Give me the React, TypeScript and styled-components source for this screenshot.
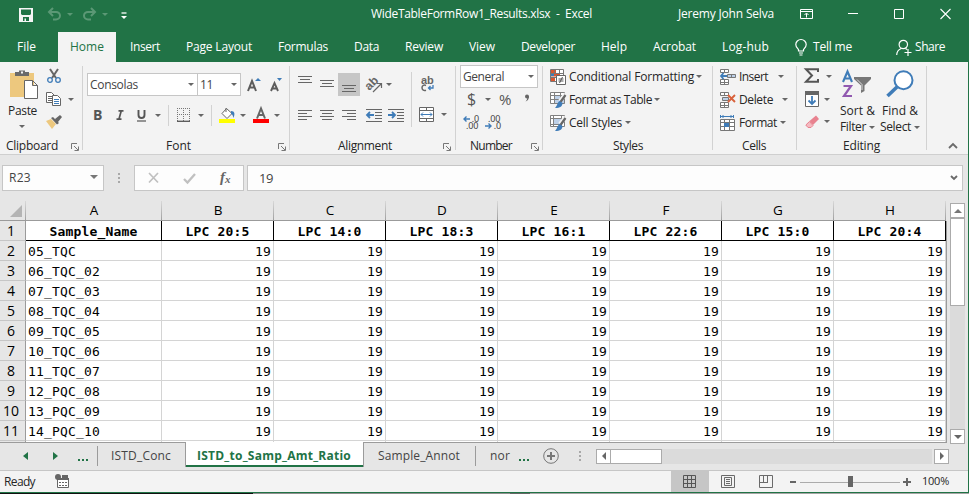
import React, { useLayoutEffect, useRef, useState } from "react";
import styled, { createGlobalStyle, css } from "styled-components";

const GREEN = "#217346";
const GRAY = "#6a6a6a";
const BLUE = "#3f7cb8";

const GlobalStyle = createGlobalStyle`
  * { box-sizing: border-box; }
  body { margin: 0; background: #e6e6e6; overflow: hidden; }
`;

const Window = styled.div`
  width: 969px;
  height: 494px;
  display: flex;
  flex-direction: column;
  font-family: "Open Sans", "Noto Sans", sans-serif;
  font-size: 12px;
  line-height: 16px;
  color: #262626;
  background: #e6e6e6;
  overflow: hidden;
`;

/* ---------- text ---------- */
type LabelStyle = { $w: number; $ml?: number; $size?: number; $color?: string; $bold?: boolean; $up?: number };
const LabelBox = styled.span<LabelStyle>`
  flex: none;
  display: block;
  width: ${(p) => p.$w}px;
  margin-left: ${(p) => p.$ml ?? 0}px;
  margin-bottom: ${(p) => (p.$up ?? 0) * 2}px;
  white-space: pre;
  font-size: ${(p) => p.$size ?? 12}px;
  font-weight: ${(p) => (p.$bold ? 700 : 400)};
  ${(p) => p.$color && css`color: ${p.$color};`}
`;

type LabelProps = { w: number; ml?: number; size?: number; color?: string; bold?: boolean; up?: number; children: string };

/* Tracks its letters so that the text fills exactly the given width. */
function Label({ w, ml, size, color, bold, up, children }: LabelProps) {
  const ref = useRef<HTMLSpanElement>(null);
  const [spacing, setSpacing] = useState(0);
  useLayoutEffect(() => {
    if (ref.current) setSpacing((w - ref.current.getBoundingClientRect().width) / children.length);
  }, []);
  return (
    <LabelBox $w={w} $ml={ml} $size={size} $color={color} $bold={bold} $up={up}>
      <span ref={ref} style={{ letterSpacing: spacing }}>{children}</span>
    </LabelBox>
  );
}

/* ---------- shared parts ---------- */
const Svg = styled.svg<{ $ml?: number; $mt?: number }>`
  flex: none;
  display: block;
  overflow: visible;
  margin-left: ${(p) => p.$ml ?? 0}px;
  margin-top: ${(p) => p.$mt ?? 0}px;
  text { font-family: "Liberation Sans", sans-serif; }
`;

type IconProps = { w: number; h: number; ml?: number; mt?: number; children: React.ReactNode };
const Icon = ({ w, h, ml, mt, children }: IconProps) => (
  <Svg width={w} height={h} viewBox={`0 0 ${w} ${h}`} $ml={ml} $mt={mt} fill="none">{children}</Svg>
);

const Caret = styled.i<{ $ml?: number; $mt?: number; $color?: string }>`
  flex: none;
  width: 0;
  height: 0;
  margin-left: ${(p) => p.$ml ?? 0}px;
  margin-top: ${(p) => p.$mt ?? 0}px;
  border: 3px solid transparent;
  border-top-color: ${(p) => p.$color ?? "#666"};
  border-bottom-width: 0;
`;

const Row = styled.div<{ $h: number; $mt?: number; $pl?: number }>`
  flex: none;
  display: flex;
  align-items: center;
  height: ${(p) => p.$h}px;
  margin-top: ${(p) => p.$mt ?? 0}px;
  padding-left: ${(p) => p.$pl ?? 0}px;
`;

const Column = styled.div<{ $w?: number; $ml?: number }>`
  flex: none;
  display: flex;
  flex-direction: column;
  width: ${(p) => (p.$w ? `${p.$w}px` : "auto")};
  margin-left: ${(p) => p.$ml ?? 0}px;
`;

/* ---------- title bar and ribbon tabs ---------- */
const TitleBar = styled.header`
  flex: none;
  height: 32px;
  display: flex;
  align-items: center;
  background: ${GREEN};
  color: #fff;
  padding-bottom: 4px;
`;

const TabBar = styled.nav`
  flex: none;
  height: 30px;
  display: flex;
  align-items: center;
  background: ${GREEN};
  color: #fff;
`;

const ActiveTab = styled.div`
  width: 58px;
  height: 30px;
  margin: 0 -13px 0 -4px;
  padding-left: 12px;
  display: flex;
  align-items: center;
  background: #f3f3f3;
  color: ${GREEN};
`;

/* name, text width, gap before */
const TABS: [string, number, number][] = [
  ["Insert", 30, 27], ["Page Layout", 66, 26], ["Formulas", 50, 26], ["Data", 25, 26], ["Review", 38, 26], ["View", 26, 26],
  ["Developer", 54, 26], ["Help", 26, 26], ["Acrobat", 43, 26], ["Log-hub", 47, 26],
];

function Header() {
  return (
    <>
      <TitleBar>
        <Icon w={14} h={14} ml={19} mt={2}>
          <path d="M0 0h14v14H0z" fill="#f5f5f5" />
          <path d="M2 1.500h10V6l-1 1H3L2 6zM4 9h6v4H7v-2.500H5.500V13H4z" fill={GREEN} />
        </Icon>
        <Icon w={16} h={14} ml={14}>
          <path d="M6 1L2 5l4 4M2 5h7a4 3.700 0 010 7.400H6" stroke="#5b9875" strokeWidth="2" />
        </Icon>
        <Caret $ml={4} $color="#5b9875" />
        <Icon w={16} h={14} ml={9}>
          <path d="M9 1l4 4-4 4M13 5H6a4 3.700 0 000 7.400h3" stroke="#5b9875" strokeWidth="2" />
        </Icon>
        <Caret $ml={4} $color="#5b9875" />
        <Icon w={6} h={8} ml={13} mt={3}>
          <path d="M.5 1h5" stroke="#fff" strokeWidth="1.300" /><path d="M0 4h6L3 7z" fill="#fff" />
        </Icon>
        <Label w={221} ml={244}>WideTableFormRow1_Results.xlsx  -  Excel</Label>
        <Label w={96} ml={86}>Jeremy John Selva</Label>
        <Icon w={13} h={10} ml={26} mt={-1}>
          <path d="M.5.500h12v9H.5zM1 2.500h11M6.500 8.500v-4M4.500 6l2-2 2 2" stroke="#fff" />
        </Icon>
        <Icon w={10} h={2} ml={35}><path d="M0 .5h10" stroke="#fff" /></Icon>
        <Icon w={10} h={10} ml={36} mt={-1}><path d="M.5.500h9v9h-9z" stroke="#fff" /></Icon>
        <Icon w={11} h={10} ml={36} mt={-1}><path d="M.5 0l10 10M10.500 0l-10 10" stroke="#fff" strokeWidth="1.100" /></Icon>
      </TitleBar>
      <TabBar>
        <Label w={19} ml={17}>File</Label>
        <Column $w={26} />
        <ActiveTab><Label w={34}>Home</Label></ActiveTab>
        {TABS.map(([name, w, gap]) => <Label key={name} w={w} ml={gap}>{name}</Label>)}
        <Icon w={12} h={17} ml={26}>
          <path d="M3.500 12V10.500C2.500 9 .8 8 .8 5.500a5.200 5 0 0110.400 0c0 2.500-1.700 3.500-2.700 5V12zM4 14h4M4.500 16h3" stroke="#fff" strokeWidth="1.200" />
        </Icon>
        <Label w={39} ml={6}>Tell me</Label>
        <Icon w={16} h={17} ml={44}>
          <circle cx="7.300" cy="5.500" r="4.200" stroke="#fff" strokeWidth="1.200" />
          <path d="M.7 16c.1-4 2.200-5.500 4.500-6.500M12 10v7M8.500 13.500h7M9.500 9.500l1.500 1" stroke="#fff" strokeWidth="1.200" />
        </Icon>
        <Label w={30} ml={3}>Share</Label>
      </TabBar>
    </>
  );
}

/* ---------- ribbon ---------- */
const Frame = styled.main`
  flex: none;
  height: 431px;
  display: flex;
  flex-direction: column;
  border-right: 1px solid ${GREEN};
  border-bottom: 1px solid ${GREEN};
`;

const Ribbon = styled.section`
  flex: none;
  display: flex;
  height: 93px;
  padding-top: 3px;
  background: #f3f3f3;
  border-bottom: 1px solid #cfcfcf;
`;

const Group = styled.div<{ $w: number }>`
  flex: none;
  width: ${(p) => p.$w}px;
  height: 89px;
  display: flex;
  flex-direction: column;
  background: linear-gradient(#d2d2d2, #d2d2d2) right 1px / 1px 84px no-repeat;
`;
const GroupBody = styled.div` height: 73px; display: flex; `;
const GroupFooter = styled.div` height: 16px; display: flex; align-items: center; `;

const Combo = styled.div<{ $w: number; $h: number; $ml?: number }>`
  flex: none;
  width: ${(p) => p.$w}px;
  height: ${(p) => p.$h}px;
  margin-left: ${(p) => p.$ml ?? 0}px;
  padding: 0 3px 0 2px;
  display: flex;
  align-items: center;
  justify-content: space-between;
  background: #fff;
  border: 1px solid #c6c6c6;
  color: #444;
`;

const Rule = styled.i<{ $h: number; $ml?: number }>`
  flex: none;
  width: 1px;
  height: ${(p) => p.$h}px;
  margin-left: ${(p) => p.$ml ?? 0}px;
  background: #d2d2d2;
`;

const Pressed = styled.div`
  width: 22px;
  height: 23px;
  margin-left: 4px;
  display: flex;
  align-items: center;
  justify-content: center;
  background: #c6c6c6;
`;

const Launcher = ({ ml }: { ml: number }) => (
  <Icon w={8} h={8} ml={ml} mt={1}>
    <path d="M.5 6V.5H6M3 3l4 4M7.500 3.500v4h-4" stroke="#777" />
  </Icon>
);

const Lines = ({ rows, ml, h = 11 }: { rows: [number, number][]; ml: number; h?: number }) => (
  <Icon w={14} h={h} ml={ml}>
    {rows.map(([x, w], i) => <path key={i} d={`M${x} ${i * 3 + 0.5}h${w}`} stroke="#666" />)}
  </Icon>
);

const Indent = ({ ml, out }: { ml: number; out?: boolean }) => (
  <Icon w={16} h={13} ml={ml}>
    <path d="M0 .5h16M9 3.500h7M9 6.500h7M9 9.500h7M0 12.500h16" stroke="#666" />
    <path d={out ? "M1 6h7M4 3L1 6l3 3" : "M0 6h7M4 3l3 3-3 3"} stroke={BLUE} strokeWidth="1.800" />
  </Icon>
);

function Clipboard() {
  return (
    <Group $w={83}>
      <GroupBody>
        <Column $w={46}>
          <Icon w={29} h={31} ml={10} mt={4}>
            <path d="M0 4h24v24H0z" fill="#edc87e" />
            <path d="M5 7V3h4V1.500h6V3h4v4z" fill="#6a6a6a" /><path d="M11 2.500h2v2h-2z" fill="#f3f3f3" />
            <path d="M14.500 11.500h8l5 5v13h-13zM22.500 11.500v5h5" fill="#fff" stroke="#666" />
          </Icon>
          <Row $h={16} $mt={3}><Label w={29} ml={8}>Paste</Label></Row>
          <Caret $ml={19} $mt={6} />
        </Column>
        <Column>
          <Icon w={16} h={16} ml={0} mt={3}>
            <path d="M4 1l6 9M12 1L6 10" stroke="#666" strokeWidth="2" />
            <circle cx="4" cy="12" r="2.300" stroke={BLUE} strokeWidth="1.300" /><circle cx="12" cy="12" r="2.300" stroke={BLUE} strokeWidth="1.300" />
          </Icon>
          <Row $h={16} $mt={7}>
            <Icon w={16} h={15}>
              <path d="M.5.500h5l3 3v7h-8zM2 4.500h5M2 6.500h5M2 8.500h4" stroke="#666" fill="#fff" />
              <path d="M6.500 3.500h5l3 3v7h-8z" stroke="#666" fill="#fff" /><path d="M8 7.500h5M8 9.500h5M8 11.500h5" stroke={BLUE} />
            </Icon>
            <Caret $ml={6} $mt={1} />
          </Row>
          <Icon w={16} h={14} mt={8}>
            <path d="M0 6l5-2 5 5-4 5z" fill="#edc87e" /><path d="M5 3l2-1 6 6-2 1.500zM9 4l5-4 2 2-4 5z" fill="#666" />
          </Icon>
        </Column>
      </GroupBody>
      <GroupFooter><Label w={52} ml={6}>Clipboard</Label><Launcher ml={13} /></GroupFooter>
    </Group>
  );
}

function FontGroup() {
  return (
    <Group $w={207}>
      <GroupBody>
        <Column>
          <Row $h={23} $mt={8} $pl={4}>
            <Combo $w={111} $h={23}><Label w={48}>Consolas</Label><Caret /></Combo>
            <Combo $w={44} $h={23} $ml={-1}><Label w={13}>11</Label><Caret /></Combo>
            <Icon w={14} h={15} ml={6} mt={-1}>
              <path d="M1 14L5 4l4 10M2.500 10.500h5" stroke="#5c5c5c" strokeWidth="2" /><path d="M8 4h6l-3-3z" fill={BLUE} />
            </Icon>
            <Icon w={14} h={15} ml={9} mt={-1}>
              <path d="M1 14l3.500-8L8 14M2.500 11.500h4" stroke="#5c5c5c" strokeWidth="1.900" /><path d="M7 1h5L9.500 4z" fill={BLUE} />
            </Icon>
          </Row>
          <Row $h={22} $mt={8} $pl={10}>
            <Label w={9} size={14} bold color="#555">B</Label>
            <Icon w={8} h={10} ml={14}><path d="M2.500 .8h5M.5 9.200h5M5.200 1L3 9" stroke="#555" strokeWidth="1.700" /></Icon>
            <Icon w={9} h={12} ml={13} mt={1}><path d="M1.500 0v5c0 4 6 4 6 0V0" stroke="#555" strokeWidth="1.900" /><path d="M0 11h9" stroke="#555" strokeWidth="1.200" /></Icon>
            <Caret $ml={9} />
            <Rule $h={21} $ml={7} />
            <Icon w={13} h={14} ml={8}>
              <path d="M.5 0v13M6.500 0v13M12.500 0v13M0 .5h13M0 6.500h13" stroke="#777" strokeDasharray="1 1" /><path d="M0 13.300h13" stroke="#555" strokeWidth="1.300" />
            </Icon>
            <Caret $ml={8} />
            <Rule $h={21} $ml={7} />
            <Icon w={16} h={16} ml={7}>
              <path d="M7.500 1.500l5.500 5-5 5-5-5zM7 5V1" stroke="#666" fill="#fff" /><path d="M12 4c4 0 4 3 2.500 7-1-3-1-4-2.500-4z" fill={BLUE} /><path d="M0 12h16v4H0z" fill="#ff0" />
            </Icon>
            <Caret $ml={5} />
            <Icon w={16} h={16} ml={7}>
              <path d="M4 11.500L8 1.500l4 10M5.500 8h5" stroke="#666" strokeWidth="2" /><path d="M0 12h16v4H0z" fill="red" />
            </Icon>
            <Caret $ml={5} />
          </Row>
        </Column>
      </GroupBody>
      <GroupFooter><Label w={25} ml={83}>Font</Label><Launcher ml={87} /></GroupFooter>
    </Group>
  );
}

function Alignment() {
  return (
    <Group $w={166}>
      <GroupBody>
        <Column $w={121}>
          <Row $h={23} $mt={8} $pl={8}>
            <Row $h={17}><Lines ml={0} h={17} rows={[[0, 14], [2, 10], [0, 14]]} /></Row>
            <Lines ml={8} h={9} rows={[[0, 14], [2, 10], [0, 14]]} />
            <Pressed><Icon w={14} h={19}><path d="M0 10.500h14M2 13.500h10M0 16.500h14" stroke="#666" /></Icon></Pressed>
            <Icon w={17} h={16} ml={6}>
              <g transform="rotate(-45 6 7)"><text x="-1" y="10" fontSize="12" fontWeight="700" fill="#666">ab</text></g>
              <path d="M7 15l8-8M11 6.500h4.500V11" stroke="#666" strokeWidth="1.200" />
            </Icon>
            <Caret $ml={3} />
          </Row>
          <Row $h={22} $mt={8} $pl={8}>
            <Lines ml={0} rows={[[0, 14], [0, 9], [0, 14], [0, 9]]} />
            <Lines ml={8} rows={[[0, 14], [2, 10], [0, 14], [2, 10]]} />
            <Lines ml={8} rows={[[0, 14], [5, 9], [0, 14], [5, 9]]} />
            <Indent ml={10} out /><Indent ml={6} />
          </Row>
        </Column>
        <Row $h={55} $mt={7}><Rule $h={55} /></Row>
        <Column>
          <Icon w={15} h={17} ml={9} mt={10}>
            <text x="0" y="9" fontSize="11" fontWeight="700" fill="#666">ab</text>
            <path d="M5 10.500C3 9.500 1 10.500 1 12.800S3 16 5 15.200" stroke="#666" strokeWidth="1.500" />
            <path d="M12 10v3H7.500M9.500 11l-2 2 2 2" stroke={BLUE} strokeWidth="1.300" />
          </Icon>
          <Row $h={16} $mt={14} $pl={7}>
            <Icon w={15} h={15}>
              <path d="M.5.500h14v14H.5zM.5 3.500h14M.5 11.500h14M7.500.5v3M7.500 11.500v3" stroke="#666" fill="#fff" />
              <path d="M2 7.500h11M4 5.500l-2 2 2 2M11 5.500l2 2-2 2" stroke={BLUE} />
            </Icon>
            <Caret $ml={7} />
          </Row>
        </Column>
      </GroupBody>
      <GroupFooter><Label w={54} ml={48}>Alignment</Label><Launcher ml={51} /></GroupFooter>
    </Group>
  );
}

const Digits = styled.span<{ $end?: boolean }>`
  font: 9px/7px "Noto Sans", sans-serif;
  height: 7px;
  letter-spacing: -0.2px;
  color: #444;
  margin-left: ${(p) => (p.$end ? "auto" : "3px")};
`;
const DecimalBox = styled.div<{ $ml?: number }>` width: 16px; margin-left: ${(p) => p.$ml ?? 0}px; `;
const DecimalLine = styled.div` height: 7px; display: flex; align-items: center; `;

const Decimal = ({ ml, more }: { ml?: number; more?: boolean }) => {
  const arrow = (
    <Icon w={7} h={6}>
      <path d={more ? "M1 3h6M3.500 .5L1 3l2.500 2.500" : "M0 3h6M3.500 .5L6 3 3.500 5.500"} stroke={BLUE} strokeWidth="1.400" />
    </Icon>
  );
  return (
    <DecimalBox $ml={ml}>
      <DecimalLine>{more && arrow}<Digits $end={more}>{more ? ".0" : ".00"}</Digits></DecimalLine>
      <DecimalLine>{!more && arrow}<Digits $end={!more}>{more ? ".00" : ".0"}</Digits></DecimalLine>
    </DecimalBox>
  );
};

function NumberGroup() {
  return (
    <Group $w={87}>
      <GroupBody>
        <Column>
          <Row $h={23} $pl={4}><Combo $w={78} $h={23}><Label w={41}>General</Label><Caret /></Combo></Row>
          <Row $h={22} $mt={0} $pl={11}>
            <Label w={9} size={16} color="#555">$</Label><Caret $ml={9} />
            <Label w={14} ml={8} size={15} color="#555">%</Label>
            <Icon w={6} h={8} ml={11} mt={-2}><circle cx="3" cy="2.500" r="2" fill="#666" /><path d="M5 2c0 3-1 4.500-3.500 5.500C3 6 3.300 5 3.300 3z" fill="#666" /></Icon>
          </Row>
          <Row $h={14} $mt={5} $pl={7}><Decimal more /><Decimal ml={6} /></Row>
        </Column>
      </GroupBody>
      <GroupFooter><Label w={42} ml={14}>Number</Label><Launcher ml={19} /></GroupFooter>
    </Group>
  );
}

const StyleGlyph = ({ table }: { table?: boolean }) => (
  <Icon w={16} h={16}>
    <path d="M.5.500h14v11H.5z" fill="#fff" />
    <path d={table ? "M5 4h10v8H5z" : "M4 4h8v6H4z"} fill="#bdd0e8" />
    <path d={table ? "M.5.500h14v11H.5zM0 3.500h15M4.500 0v12M10.500 0v12M0 7.500h15" : "M.5.500h14v11H.5zM0 3.500h15M3.500 0v12M11.500 0v12M0 9.500h11"} stroke="#808080" />
    <path d="M15.500 2L10 9" stroke="#f3f3f3" strokeWidth="4" /><path d="M15.500 3l-5 7" stroke="#666" strokeWidth="2.200" />
    <path d="M9.500 9l3 2c0 3-2 5-7.500 5 2-1.500 2-5 4.500-7z" fill={BLUE} />
  </Icon>
);

function Styles() {
  return (
    <Group $w={170}>
      <GroupBody>
        <Column>
          <Row $h={23} $pl={7}>
            <Icon w={16} h={16}>
              <path d="M.5.500h13v12H.5z" fill="#fff" /><path d="M1 1h5v3H1zM1 8h4v4H1z" fill="#d9562f" /><path d="M1 4.500h9v3H1z" fill="#d9562f" /><path d="M1 5h3v2H1z" fill={BLUE} />
              <path d="M.5.500h13v12H.5zM4.500 0v5M9.500 0v5M0 4.500h14M0 8.500h6" stroke="#777" />
              <path d="M6.500 6.500h9v9h-9z" fill="#fff" stroke="#666" /><path d="M8.500 10h5M8.500 12h5M12.500 8l-3 6" stroke="#555" />
            </Icon>
            <Label w={125} ml={3}>Conditional Formatting</Label><Caret $ml={2} />
          </Row>
          <Row $h={23} $pl={7}><StyleGlyph table /><Label w={83} ml={3}>Format as Table</Label><Caret $ml={2} /></Row>
          <Row $h={23} $pl={7}><StyleGlyph /><Label w={53} ml={3}>Cell Styles</Label><Caret $ml={3} /></Row>
        </Column>
      </GroupBody>
      <GroupFooter><Label w={30} ml={70}>Styles</Label></GroupFooter>
    </Group>
  );
}

function Cells() {
  return (
    <Group $w={84}>
      <GroupBody>
        <Column>
          <Row $h={23} $pl={7}>
            <Icon w={16} h={16}>
              <path d="M.5.500h8v3h-8zM4.500 0v4M.5 10.500h8v5h-8zM.5 13.500h8M4.500 10v6" stroke="#777" fill="#fff" />
              <path d="M7.500 5.500h8v3h-8zM11.500 5v4" stroke="#777" fill="#bdd0e8" /><path d="M1 7h6M3.500 4L1 7l2.500 3" stroke={BLUE} strokeWidth="1.800" />
            </Icon>
            <Label w={29} ml={3}>Insert</Label><Caret $ml={10} />
          </Row>
          <Row $h={23} $pl={7}>
            <Icon w={16} h={16}>
              <path d="M.5.500h8v3h-8zM4.500 0v4M.5 10.500h8v5h-8zM.5 13.500h8M4.500 10v6" stroke="#777" fill="#fff" />
              <path d="M2.500 5.500h6v3h-6z" stroke="#777" fill="#bdd0e8" /><path d="M8 3l7 7M15 3l-7 7" stroke="#d9623c" strokeWidth="1.900" />
            </Icon>
            <Label w={34} ml={3}>Delete</Label><Caret $ml={9} />
          </Row>
          <Row $h={23} $pl={7}>
            <Icon w={16} h={16}>
              <path d="M.5 4.500h14v11H.5zM.5 7.500h14M.5 11.500h14M4.500 4v11M9.500 4v11" stroke="#777" fill="#fff" />
              <path d="M4 8h5v4H4z" fill={BLUE} /><path d="M1 1.500h12M.5 0v3M13.500 0v3M3.500 0L2 1.500 3.500 3M10.500 0L12 1.500 10.500 3" stroke={BLUE} />
            </Icon>
            <Label w={38} ml={3}>Format</Label><Caret $ml={3} />
          </Row>
        </Column>
      </GroupBody>
      <GroupFooter><Label w={24} ml={29}>Cells</Label></GroupFooter>
    </Group>
  );
}

function Editing() {
  return (
    <Group $w={130}>
      <GroupBody>
        <Column $w={40}>
          <Row $h={21} $pl={7}>
            <Icon w={16} h={15}><path d="M14 4V1.300H2L8 7.500 2 13.700h12V11" stroke="#555" strokeWidth="2" /></Icon><Caret $ml={6} $mt={1} />
          </Row>
          <Row $h={25} $pl={8}>
            <Icon w={14} h={16}>
              <path d="M.5.500h13v15H.5z" fill="#fff" stroke="#666" /><path d="M0 0h14v4H0z" fill="#666" /><path d="M7 5v8M3.500 9.500L7 13l3.500-3.500" stroke={BLUE} strokeWidth="1.800" />
            </Icon><Caret $ml={5} $mt={1} />
          </Row>
          <Row $h={21} $pl={8}>
            <Icon w={14} h={14}><path d="M4.500 6l6.500-5.500 3 3.500-6 6z" fill="#e8828f" /><path d="M4.500 6.500l3.500 4-2 2H3L.8 10z" fill="#f4b9c0" stroke="#e8828f" /></Icon><Caret $ml={5} />
          </Row>
        </Column>
        <Column $w={43}>
          <Icon w={30} h={29} ml={5} mt={5}>
            <path d="M1 12L5.500 1.500 10 12M2.500 8.500h6" stroke={BLUE} strokeWidth="2.100" />
            <path d="M1.500 16H9L2 26h8" stroke="#9159b0" strokeWidth="2.200" />
            <path d="M12 7h17v2l-6.500 6.500V21L19 23v-7.500L12 9z" fill="#777" /><path d="M15 9.500l5 5V20" stroke="#ddd" />
          </Icon>
          <Row $h={16} $mt={4}><Label w={35} ml={3}>Sort &amp;</Label></Row>
          <Row $h={16}><Label w={26} ml={3}>Filter</Label><Caret $ml={3} /></Row>
        </Column>
        <Column>
          <Icon w={28} h={29} ml={6} mt={5}>
            <circle cx="17.500" cy="10.200" r="9" stroke={BLUE} strokeWidth="2" fill="#fff" /><path d="M11 17l-9.500 9" stroke={BLUE} strokeWidth="3.600" />
          </Icon>
          <Row $h={16} $mt={4}><Label w={36} ml={2}>Find &amp;</Label></Row>
          <Row $h={16}><Label w={31} ml={0}>Select</Label><Caret $ml={3} /></Row>
        </Column>
      </GroupBody>
      <GroupFooter><Label w={37} ml={46}>Editing</Label></GroupFooter>
    </Group>
  );
}

/* ---------- formula bar ---------- */
const FormulaBar = styled.section` flex: none; height: 46px; display: flex; padding: 10px 0 0 2px; `;
const Field = styled.div<{ $w: number; $ml?: number }>`
  flex: none;
  display: flex;
  align-items: center;
  width: ${(p) => p.$w}px;
  height: 26px;
  margin-left: ${(p) => p.$ml ?? 0}px;
  background: #fdfdfd;
  border: 1px solid #c6c6c6;
  color: #444;
`;
const Dots = styled.i<{ $ml: number; $mt?: number }>`
  flex: none;
  width: 2px;
  height: 10px;
  margin: ${(p) => p.$mt ?? 0}px 0 0 ${(p) => p.$ml}px;
  background: repeating-linear-gradient(#a8a8a8 0 2px, transparent 2px 4px);
`;
const Italic = styled.span<{ $ml: number }>`
  margin: -2px 0 0 ${(p) => p.$ml}px;
  font: italic bold 15px "Liberation Serif", serif;
  color: #666;
  sub { font-size: 11px; vertical-align: -1px; }
`;

/* ---------- sheet ---------- */
const SheetArea = styled.section` flex: none; display: flex; height: 242px; `;
const Grid = styled.div`
  width: 947px;
  height: 242px;
  overflow: hidden;
  display: grid;
  grid-template-columns: 26px 136px repeat(7, 112px) 1px;
  grid-template-rows: 20px repeat(12, 20px);
  border-bottom: 1px solid #9b9b9b;
  background: #fff;
  font-family: "DejaVu Sans Mono", monospace;
  font-size: 13px;
  letter-spacing: 0.17px;
  line-height: 20px;
  color: #000;
`;
const ColHead = styled.div`
  font-family: "Open Sans", sans-serif;
  font-size: 13.500px;
  text-align: center;
  letter-spacing: 0;
  background: linear-gradient(#d8d8d8, #a0a0a0) right / 1px 100% no-repeat #e6e6e6;
  border-bottom: 1px solid #9b9b9b;
  line-height: 19px;
`;
const Corner = styled(ColHead)` display: flex; align-items: flex-end; justify-content: flex-end; padding: 0 4px 3px 0; `;
const RowHead = styled.div`
  font-family: "Open Sans", sans-serif;
  font-size: 14px;
  letter-spacing: -0.1px;
  text-align: center;
  padding-right: 3px;
  background: #e6e6e6;
  border-right: 1px solid #9b9b9b;
  border-bottom: 1px solid #c6c6c6;
`;
const Cell = styled.div<{ $kind: "head" | "name" | "num" }>`
  padding: 0 2px;
  line-height: ${(p) => (p.$kind === "head" ? 21 : 22)}px;
  height: 20px;
  border-right: 1px solid ${(p) => (p.$kind === "head" ? "#000" : "#d4d4d4")};
  border-bottom: 1px solid ${(p) => (p.$kind === "head" ? "#000" : "#d4d4d4")};
  font-weight: ${(p) => (p.$kind === "head" ? 700 : 400)};
  text-align: ${(p) => (p.$kind === "head" ? "center" : p.$kind === "name" ? "left" : "right")};
`;
const Edge = styled.div<{ $shade?: boolean }>` background: ${(p) => (p.$shade ? "#e6e6e6" : "#9b9b9b")}; `;

const COLS = ["LPC 20:5", "LPC 14:0", "LPC 18:3", "LPC 16:1", "LPC 22:6", "LPC 15:0", "LPC 20:4"];
const NAMES = ["05_TQC", "06_TQC_02", "07_TQC_03", "08_TQC_04", "09_TQC_05", "10_TQC_06", "11_TQC_07", "12_PQC_08", "13_PQC_09", "14_PQC_10"];

const VScroll = styled.div` width: 15px; height: 241px; margin: 2px 0 0 3px; display: flex; flex-direction: column; background: #dbdbdb; `;
const ScrollButton = styled.div`
  flex: none; width: 15px; height: 15px; display: flex; align-items: center; justify-content: center;
  background: #fff; border: 1px solid #ababab;
`;
const VThumb = styled.div` height: 88px; background: #fff; border: 1px solid #ababab; `;
const Fill = styled.div` flex: 1; `;

function Sheet() {
  return (
    <SheetArea>
      <Grid>
        <Corner><Icon w={12} h={12}><path d="M12 0v12H0z" fill="#b4b4b4" /></Icon></Corner>
        {"ABCDEFGH".split("").map((c) => <ColHead key={c}>{c}</ColHead>)}
        <Edge $shade />
        <RowHead>1</RowHead>
        <Cell $kind="head">Sample_Name</Cell>
        {COLS.map((c) => <Cell key={c} $kind="head">{c}</Cell>)}
        <Edge />
        {[...NAMES, ""].map((name, i) => (
          <React.Fragment key={i}>
            <RowHead>{name && i + 2}</RowHead>
            <Cell $kind="name">{name}</Cell>
            {COLS.map((c) => <Cell key={c} $kind="num">{name && "19"}</Cell>)}
            <Edge />
          </React.Fragment>
        ))}
      </Grid>
      <VScroll>
        <ScrollButton><Icon w={8} h={4}><path d="M0 4h8L4 0z" fill="#777" /></Icon></ScrollButton>
        <VThumb />
        <Fill />
        <ScrollButton><Icon w={8} h={4}><path d="M0 0h8L4 4z" fill="#666" /></Icon></ScrollButton>
      </VScroll>
    </SheetArea>
  );
}

/* ---------- sheet tabs ---------- */
const SheetTabs = styled.nav` flex: none; height: 27px; display: flex; align-items: flex-start; color: #444; `;
const TabRow = styled.div<{ $w: number }>` flex: none; width: ${(p) => p.$w}px; height: 26px; display: flex; align-items: center; `;
const CurrentSheet = styled.div`
  flex: none;
  width: 179px;
  height: 25px;
  margin-top: -1px;
  padding-left: 11px;
  display: flex;
  align-items: center;
  background: #fff;
  border: solid #9b9b9b;
  border-width: 0 1px;
  box-shadow: inset 0 -2px ${GREEN};
  color: ${GREEN};
`;
const TabRule = styled.i<{ $ml: number }>` width: 1px; height: 20px; margin-left: ${(p) => p.$ml}px; background: #9b9b9b; `;
const Ellipsis = styled.i<{ $ml: number }>`
  flex: none;
  width: 10px;
  height: 2px;
  margin: 8px 0 0 ${(p) => p.$ml}px;
  background: repeating-linear-gradient(90deg, ${GREEN} 0 2px, transparent 2px 4px);
`;
const HScroll = styled.div` width: 353px; height: 15px; margin-left: 15px; display: flex; `;
const HThumb = styled.div` width: 52px; margin-left: -1px; background: #fff; border: 1px solid #ababab; `;
const HTrack = styled.div` flex: 1; margin-right: 2px; background: #dbdbdb; `;

function Tabs() {
  return (
    <SheetTabs>
      <TabRow $w={185}>
        <Icon w={5} h={8} ml={23}><path d="M5 0v8L0 4z" fill={GREEN} /></Icon>
        <Icon w={5} h={8} ml={25}><path d="M0 0v8l5-4z" fill={GREEN} /></Icon>
        <Ellipsis $ml={20} />
        <TabRule $ml={9} />
        <Label w={60} ml={13}>ISTD_Conc</Label>
      </TabRow>
      <CurrentSheet><Label w={154} bold up={-1}>ISTD_to_Samp_Amt_Ratio</Label></CurrentSheet>
      <TabRow $w={604}>
        <Label w={82} ml={14}>Sample_Annot</Label>
        <TabRule $ml={15} />
        <Label w={20} ml={14}>nor</Label>
        <Ellipsis $ml={9} />
        <Icon w={16} h={16} ml={14}><circle cx="8" cy="8" r="7.300" stroke="#777" /><path d="M8 4v8M4 8h8" stroke="#777" strokeWidth="2" /></Icon>
        <Dots $ml={20} />
        <HScroll>
          <ScrollButton><Icon w={4} h={8}><path d="M4 0v8L0 4z" fill="#666" /></Icon></ScrollButton>
          <HThumb /><HTrack />
          <ScrollButton><Icon w={4} h={8}><path d="M0 0v8l4-4z" fill="#666" /></Icon></ScrollButton>
        </HScroll>
      </TabRow>
    </SheetTabs>
  );
}

/* ---------- status bar ---------- */
const StatusBar = styled.footer`
  flex: none;
  height: 22px;
  display: flex;
  align-items: center;
  background: #f3f3f3;
  border-top: 1px solid #c6c6c6;
`;
const ViewButton = styled.div` width: 38px; height: 21px; margin-left: 602px; display: flex; align-items: center; justify-content: center; background: #c6c6c6; `;
const Backdrop = styled.div` flex: none; height: 1px; background: linear-gradient(90deg, #111 253px, #8f8f8f 253px 510px, #666 510px 530px, #a5a5a5 530px); `;

export default function App() {
  return (
    <Window>
      <GlobalStyle />
      <Header />
      <Frame>
        <Ribbon>
          <Clipboard /><FontGroup /><Alignment /><NumberGroup /><Styles /><Cells /><Editing />
          <Icon w={10} h={6} ml={21} mt={78}><path d="M1 5l4-4 4 4" stroke={GRAY} strokeWidth="1.800" /></Icon>
        </Ribbon>
        <FormulaBar>
          <Field $w={102}><Label w={22} ml={6}>R23</Label><Icon w={8} h={4} ml={59} mt={-2}><path d="M0 0h8L4 4z" fill="#777" /></Icon></Field>
          <Dots $ml={14} $mt={8} />
          <Field $w={110} $ml={14}>
            <Icon w={11} h={10} ml={13}><path d="M1 0l9 9.500M10 0L1 9.500" stroke="#c0c0c0" strokeWidth="1.700" /></Icon>
            <Icon w={13} h={11} ml={24}><path d="M1 6l3.500 3.500L12 1" stroke="#c0c0c0" strokeWidth="2.300" /></Icon>
            <Italic $ml={24}>f<sub>x</sub></Italic>
          </Field>
          <Field $w={716} $ml={3}>
            <Label w={14} ml={11} size={13}>19</Label>
            <Icon w={8} h={6} ml={677} mt={-1}><path d="M1 1l3 3 3-3" stroke={GRAY} strokeWidth="1.900" /></Icon>
          </Field>
        </FormulaBar>
        <Sheet />
        <Tabs />
        <StatusBar>
          <Label w={31} ml={4}>Ready</Label>
          <Icon w={14} h={14} ml={20} mt={-1}>
            <path d="M2.500 4.500h11v9h-11z" stroke="#666" fill="#fff" /><path d="M7 1h6v3H7zM2 4h12v2H2z" fill="#666" /><circle cx="3" cy="3" r="3" fill="#666" />
            <path d="M4 8.500h8M4 11.500h8" stroke="#666" strokeDasharray="2 1" />
          </Icon>
          <ViewButton><Icon w={13} h={13} ml={-1}><path d="M.5.500h12v12H.5zM4.500 0v13M8.500 0v13M0 4.500h13M0 8.500h13" stroke="#555" /></Icon></ViewButton>
          <Icon w={14} h={13} ml={12}><path d="M.5.500h13v12H.5zM3.500 2.500h7v8h-7zM5 4.500h4M5 6.500h4M5 8.500h4" stroke={GRAY} /></Icon>
          <Icon w={14} h={13} ml={24}><path d="M.5.500h13v12H.5zM4.500 0v7.500M8.500 0v7.500M0 7.500h9" stroke={GRAY} /></Icon>
          <Icon w={122} h={12} ml={17}>
            <path d="M0 6h6M113 6h8M117 2v8" stroke="#666" strokeWidth="2" /><path d="M10 6.500h100" stroke="#ababab" /><path d="M58 0h5v11h-5z" fill="#666" />
          </Icon>
          <Label w={27} ml={10} size={11} up={1}>100%</Label>
        </StatusBar>
      </Frame>
      <Backdrop />
    </Window>
  );
}
